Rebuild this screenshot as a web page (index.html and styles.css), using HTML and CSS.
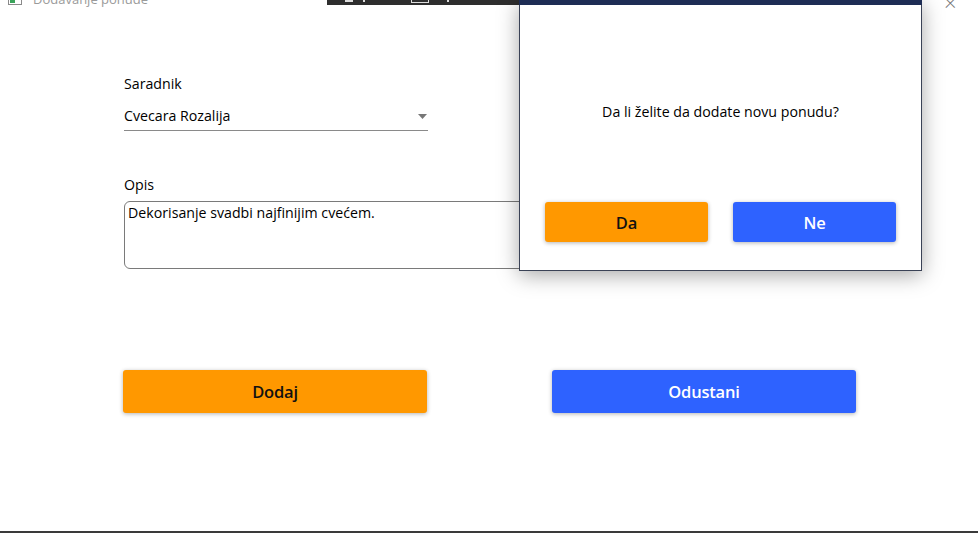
FILE: index.html
```html
<!DOCTYPE html>
<html lang="sr">
<head>
<meta charset="utf-8">
<title>Dodavanje ponude</title>
<link rel="stylesheet" href="styles.css">
</head>
<body>
<div class="window">
  <div class="titlebar">
    <svg class="app-icon" width="14" height="12" viewBox="0 0 14 12"><rect x="0.5" y="0.5" width="13" height="11" fill="#fff" stroke="#8a8a8a"/><rect x="2" y="6" width="5" height="4" fill="#3aa35a"/></svg>
    <span class="title">Dodavanje ponude</span>
  </div>

  <div class="form">
    <div class="field">
      <label class="label">Saradnik</label>
      <div class="combo">
        <span class="combo-value">Cvecara Rozalija</span>
        <svg class="combo-arrow" width="9" height="5" viewBox="0 0 9 5"><path d="M0 0 H9 L4.5 5 Z" fill="#777"/></svg>
      </div>
    </div>

    <div class="field field-opis">
      <label class="label">Opis</label>
      <div class="textarea">Dekorisanje svadbi najfinijim cvećem.</div>
    </div>

    <div class="actions">
      <button class="btn btn-orange">Dodaj</button>
      <button class="btn btn-blue">Odustani</button>
    </div>
  </div>

  <div class="bottom-line"></div>
  <div class="close-x">×</div>
</div>

<div class="bg-strip">
  <span class="mark m1"></span><span class="mark m2"></span><span class="mark m3"></span><span class="mark m4"></span>
</div>

<div class="dialog">
  <div class="dialog-top"></div>
  <div class="dialog-body">
    <p class="question">Da li želite da dodate novu ponudu?</p>
    <div class="dialog-actions">
      <button class="btn btn-orange btn-small">Da</button>
      <button class="btn btn-blue btn-small">Ne</button>
    </div>
  </div>
</div>
</body>
</html>
```

FILE: styles.css
```css
* { box-sizing: border-box; }
html, body { margin: 0; padding: 0; background: #fff; }
body {
  width: 978px;
  height: 533px;
  overflow: hidden;
  position: relative;
  font-family: "Open Sans", "Noto Sans", sans-serif;
  color: #000;
}
.window {
  height: 533px;
  display: flex;
  flex-direction: column;
}
.titlebar {
  display: flex;
  align-items: center;
  gap: 11px;
  height: 16px;
  margin-top: -9px;
  padding-left: 8px;
  color: #9a9a9a;
  font-size: 13px;
}
.app-icon { flex: none; }
.form {
  padding-left: 124px;
  display: flex;
  flex-direction: column;
}
.field { display: flex; flex-direction: column; width: 304px; }
.label {
  font-size: 14.2px;
  line-height: 20px;
  margin-top: 67px;
}
.combo {
  margin-top: 12px;
  height: 25px;
  border-bottom: 1px solid #8a8a8a;
  display: flex;
  justify-content: space-between;
  align-items: flex-start;
  font-size: 14.2px;
  line-height: 20px;
}
.combo-arrow { margin-top: 8px; margin-right: 1px; }
.field-opis { width: 732px; }
.field-opis .label { margin-top: 44px; }
.textarea {
  margin-top: 6px;
  height: 68px;
  border: 1px solid #7a7a7a;
  border-radius: 6px;
  padding: 1px 3px;
  font-size: 14.2px;
  line-height: 20px;
}
.actions {
  margin-top: 101px;
  display: flex;
  gap: 125px;
  margin-left: -1px;
}
.btn {
  width: 304px;
  height: 43px;
  border: none;
  border-radius: 3px;
  font-family: "Open Sans", "Noto Sans", sans-serif;
  font-size: 16.5px;
  font-weight: 600;
  box-shadow: 0 1px 4px rgba(0,0,0,0.3);
  letter-spacing: -0.2px;
}
.btn-orange { background: #ff9800; color: #111; }
.btn-blue { background: #2e62ff; color: #fff; }
.btn-small { width: 163px; height: 40px; }
.bottom-line {
  margin-top: auto;
  height: 2px;
  background: #3a3a3a;
}
.close-x {
  position: absolute;
  left: 944px;
  top: -13px;
  font-size: 22px;
  color: #777;
  font-weight: 300;
}
.bg-strip {
  position: absolute;
  left: 327px;
  top: 0;
  width: 194px;
  height: 5px;
  background: #2e2e2e;
}
.mark { position: absolute; top: 0; height: 2px; background: #ddd; }
.m1 { left: 18px; width: 8px; }
.m2 { left: 36px; width: 2px; }
.m3 { left: 84px; width: 18px; height: 3px; border: 1px solid #ddd; background: transparent; border-top: none; }
.m4 { left: 120px; width: 2px; }
.dialog {
  position: absolute;
  left: 519px;
  top: 0;
  width: 403px;
  height: 271px;
  background: #fff;
  border: 1px solid #3a4256;
  border-top: none;
  box-shadow: 0 4px 20px rgba(0,0,0,0.35);
  display: flex;
  flex-direction: column;
}
.dialog-top { height: 5px; background: #1e2d55; margin: 0 -1px; }
.dialog-body {
  flex: 1;
  display: flex;
  flex-direction: column;
  align-items: center;
}
.question {
  margin: 97px 0 0;
  font-size: 14.2px;
  line-height: 20px;
}
.dialog-actions {
  margin-top: 80px;
  display: flex;
  gap: 25px;
}
```
